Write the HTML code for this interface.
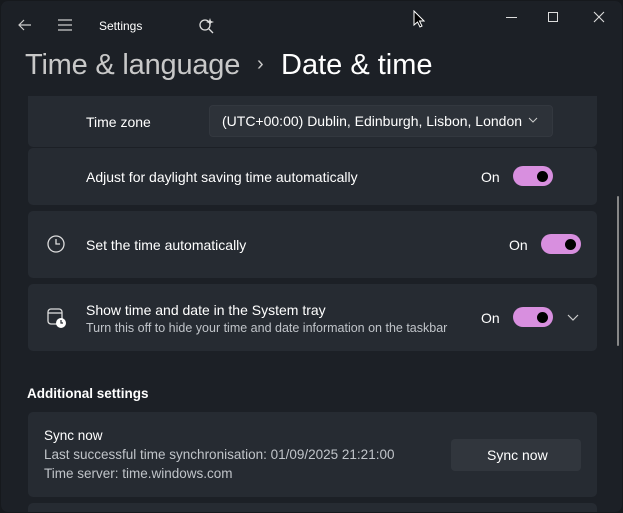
<!DOCTYPE html>
<html><head><style>
*{margin:0;padding:0;box-sizing:border-box}
body{width:623px;height:513px;background:#16191d;font-family:"Liberation Sans",sans-serif;color:#fff;overflow:hidden;position:relative}
.win{position:absolute;left:1px;top:1px;width:621px;height:511px;background:#1c2026;border-radius:7px;overflow:hidden}
.a{position:absolute}
.card{position:absolute;left:27px;width:569px;background:#262b32;border-radius:5px}
.t{position:absolute;font-size:14px;color:#fff;white-space:nowrap}
.s{font-size:12px;color:#c0c4c9}
.tog{position:absolute;width:40px;height:20px;border-radius:10px;background:#d88fdf}
.tog:after{content:"";position:absolute;right:5px;top:5px;width:11px;height:11px;border-radius:50%;background:#000}
</style></head><body>
<div class="win">
<svg class="a" style="left:16px;top:17px" width="16" height="14"><path d="M7 2L2 7L7 12M2 7H14" stroke="#ccc" stroke-width="1.2" fill="none"/></svg>
<svg class="a" style="left:56px;top:17px" width="16" height="14"><path d="M1 2H15M1 7H15M1 12H15" stroke="#ccc" stroke-width="1.2"/></svg>
<div class="t" style="left:98px;top:18px;font-size:12px">Settings</div>
<svg class="a" style="left:197px;top:16px" width="18" height="18"><circle cx="7" cy="8" r="5" stroke="#ddd" stroke-width="1.3" fill="none"/><path d="M11 12L15 16" stroke="#ddd" stroke-width="1.3"/><path d="M12 1L13 4L16 5L13 6L12 9L11 6L8 5L11 4Z" fill="#ddd"/></svg>
<div class="a" style="left:505px;top:16px;width:11px;height:1px;background:#ddd"></div>
<div class="a" style="left:547px;top:11px;width:10px;height:10px;border:1px solid #ddd"></div>
<svg class="a" style="left:592px;top:10px" width="12" height="12"><path d="M1 1L11 11M11 1L1 11" stroke="#ddd" stroke-width="1.1"/></svg>
<div class="t" style="left:24px;top:48px;font-size:29px;color:#c8c8c8;letter-spacing:-0.2px">Time &amp; language</div>
<div class="t" style="left:256px;top:52px;font-size:20px;color:#c8c8c8">›</div>
<div class="t" style="left:280px;top:48px;font-size:29px">Date &amp; time</div>

<div class="card" style="top:95px;height:51px;border-radius:0 0 5px 5px"></div>
<div class="card" style="top:147px;height:57px"></div>
<div class="t" style="left:85px;top:113px">Time zone</div>
<div class="a" style="left:208px;top:104px;width:344px;height:32px;background:#2d3239;border-radius:4px;border:1px solid #33383f"></div>
<div class="t" style="left:221px;top:112px">(UTC+00:00) Dublin, Edinburgh, Lisbon, London</div>
<svg class="a" style="left:527px;top:116px" width="10" height="6"><path d="M1 1L5 5L9 1" stroke="#ccc" fill="none"/></svg>
<div class="t" style="left:85px;top:168px">Adjust for daylight saving time automatically</div>
<div class="t" style="left:480px;top:168px">On</div>
<div class="tog" style="left:512px;top:165px"></div>

<div class="card" style="top:210px;height:67px"></div>
<svg class="a" style="left:45px;top:233px" width="20" height="20"><circle cx="10" cy="10" r="8" stroke="#ddd" stroke-width="1.3" fill="none"/><path d="M10 5V10H14" stroke="#ddd" stroke-width="1.3" fill="none"/></svg>
<div class="t" style="left:85px;top:236px">Set the time automatically</div>
<div class="t" style="left:508px;top:236px">On</div>
<div class="tog" style="left:540px;top:233px"></div>

<div class="card" style="top:283px;height:67px"></div>
<svg class="a" style="left:45px;top:306px" width="22" height="22"><rect x="2" y="2" width="14" height="15" rx="3" stroke="#ddd" stroke-width="1.3" fill="none"/><path d="M2 6H16" stroke="#ddd" stroke-width="1.3"/><circle cx="15" cy="16" r="5" fill="#fff"/><path d="M15 13V16H17" stroke="#262b32" stroke-width="1.2" fill="none"/></svg>
<div class="t" style="left:85px;top:301px">Show time and date in the System tray</div>
<div class="t s" style="left:85px;top:320px;font-size:12.5px">Turn this off to hide your time and date information on the taskbar</div>
<div class="t" style="left:480px;top:309px">On</div>
<div class="tog" style="left:512px;top:306px"></div>
<svg class="a" style="left:566px;top:313px" width="12" height="8"><path d="M1 1L6 6L11 1" stroke="#ccc" stroke-width="1.2" fill="none"/></svg>

<div class="t" style="left:26px;top:385px;font-weight:bold;font-size:13.5px">Additional settings</div>
<div class="card" style="top:411px;height:85px"></div>
<div class="t" style="left:43px;top:427px;font-size:13.5px">Sync now</div>
<div class="t s" style="left:43px;top:446px;font-size:13.5px">Last successful time synchronisation: 01/09/2025 21:21:00</div>
<div class="t s" style="left:43px;top:465px;font-size:13.5px">Time server: time.windows.com</div>
<div class="a" style="left:450px;top:438px;width:130px;height:32px;background:#31363d;border-radius:4px"></div>
<div class="t" style="left:486px;top:446px">Sync now</div>
<div class="card" style="top:502px;height:30px"></div>
<div class="a" style="left:616px;top:195px;width:2px;height:150px;background:#888;border-radius:1px"></div>
</div>
<svg class="a" style="left:413px;top:10px" width="12" height="18"><path d="M1 1V15L4.5 12L7 17L9 16L6.5 11H11Z" fill="#000" stroke="#fff" stroke-width="1"/></svg>
</body></html>
